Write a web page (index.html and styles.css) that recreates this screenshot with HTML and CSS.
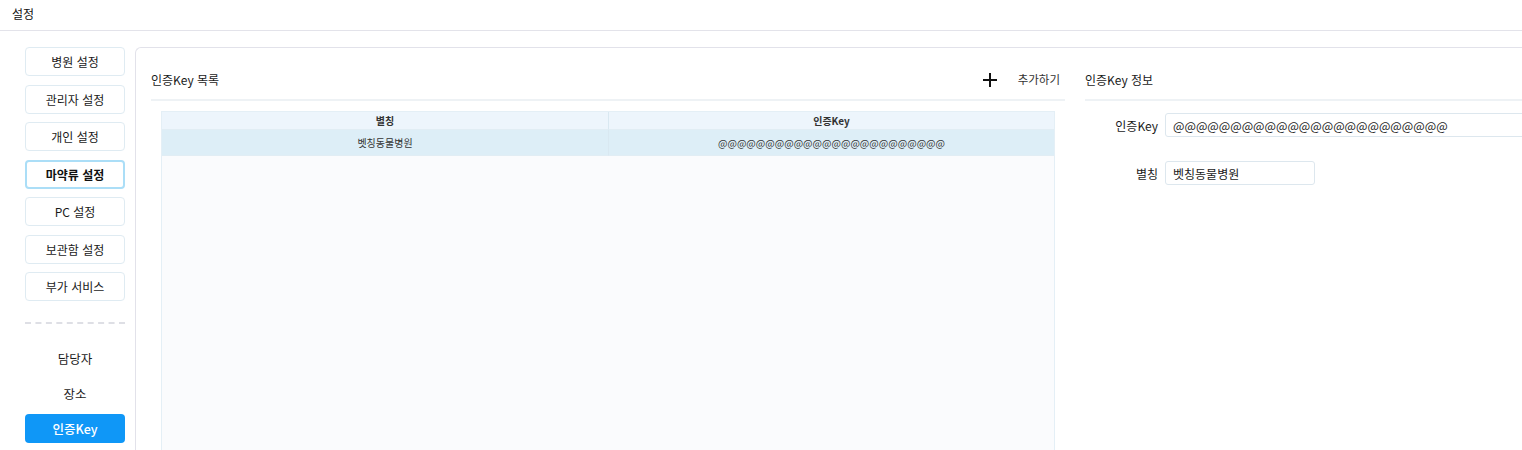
FILE: index.html
```html
<!DOCTYPE html>
<html lang="ko">
<head>
  <meta charset="UTF-8">
  <meta name="viewport" content="width=device-width, initial-scale=1.0">
  <title>설정</title>
  <link rel="stylesheet" href="styles.css">
</head>
<body>
  <header class="topbar">설정</header>

  <div class="main">
    <nav class="sidebar">
      <button class="menu-btn">병원 설정</button>
      <button class="menu-btn">관리자 설정</button>
      <button class="menu-btn">개인 설정</button>
      <button class="menu-btn active">마약류 설정</button>
      <button class="menu-btn">PC 설정</button>
      <button class="menu-btn">보관함 설정</button>
      <button class="menu-btn">부가 서비스</button>

      <div class="divider"></div>

      <div class="sub-menu">
        <button class="sub-btn">담당자</button>
        <button class="sub-btn">장소</button>
        <button class="sub-btn selected">인증Key</button>
      </div>
    </nav>

    <section class="panel">
      <div class="key-list">
        <div class="section-head">
          <span class="section-title">인증Key 목록</span>
          <button class="add-btn">
            <svg width="14" height="14" viewBox="0 0 14 14">
              <path d="M7 0v14M0 7h14" stroke="#111" stroke-width="2"/>
            </svg>
            <span>추가하기</span>
          </button>
        </div>

        <div class="table">
          <div class="row head">
            <div class="cell">별칭</div>
            <div class="cell">인증Key</div>
          </div>
          <div class="row picked">
            <div class="cell">벳칭동물병원</div>
            <div class="cell">@@@@@@@@@@@@@@@@@@@@@@@@</div>
          </div>
        </div>
      </div>

      <div class="key-info">
        <div class="section-head">
          <span class="section-title">인증Key 정보</span>
        </div>

        <div class="form">
          <label class="field">
            <span class="field-label">인증Key</span>
            <input class="input wide" type="text" value="@@@@@@@@@@@@@@@@@@@@@@@@">
          </label>
          <label class="field">
            <span class="field-label">별칭</span>
            <input class="input" type="text" value="벳칭동물병원">
          </label>
        </div>
      </div>
    </section>
  </div>
</body>
</html>
```

FILE: styles.css
```css
* {
  box-sizing: border-box;
}

html,
body {
  height: 100%;
}

body {
  margin: 0;
  font-family: "Noto Sans CJK KR", "Noto Sans", sans-serif;
  font-size: 12px;
  color: #1a1a1a;
  background: #fff;
  display: flex;
  flex-direction: column;
  overflow: hidden;
}

.topbar {
  height: 31px;
  padding: 5px 12px 0;
  font-size: 12px;
  color: #111;
  border-bottom: 1px solid #e3e3ea;
}

.main {
  flex: 1;
  display: flex;
  gap: 10px;
  padding: 16px 0 0 25px;
  min-height: 0;
}

/* left menu */
.sidebar {
  width: 100px;
  flex-shrink: 0;
  display: flex;
  flex-direction: column;
}

.menu-btn {
  height: 29px;
  margin-bottom: 8.5px;
  font-family: inherit;
  font-size: 12px;
  color: #1a1a1a;
  background: #fff;
  border: 1px solid #dfebf2;
  border-radius: 4px;
  cursor: pointer;
}

.menu-btn.active {
  border: 2px solid #abdef7;
  font-weight: bold;
  color: #111;
}

.divider {
  margin-top: 12px;
  border-top: 2px dashed #dedfe5;
}

.sub-menu {
  display: flex;
  flex-direction: column;
  gap: 6px;
  margin-top: 20px;
}

.sub-btn {
  height: 29px;
  font-family: inherit;
  font-size: 12.5px;
  color: #1a1a1a;
  background: none;
  border: none;
  border-radius: 4px;
  cursor: pointer;
}

.sub-btn.selected {
  background: #0f97f7;
  color: #fff;
  font-weight: 500;
}

/* main panel */
.panel {
  flex: 1;
  display: flex;
  gap: 20px;
  padding: 0 0 0 15px;
  border: 1px solid #e2e2ea;
  border-right: none;
  border-bottom: none;
  border-top-left-radius: 6px;
  min-width: 0;
}

.key-list {
  width: 914px;
  flex-shrink: 0;
  display: flex;
  flex-direction: column;
}

.key-info {
  flex: 1;
  min-width: 0;
  overflow: hidden;
}

.section-head {
  height: 53px;
  padding: 23px 0 0;
  display: flex;
  align-items: flex-start;
  justify-content: space-between;
  border-bottom: 2px solid #eef2f5;
}

.section-title {
  font-size: 12px;
  color: #1a1a1a;
  line-height: 17px;
}

.add-btn {
  display: flex;
  align-items: center;
  gap: 21px;
  margin-right: 5px;
  padding: 0;
  font-family: inherit;
  font-size: 11.5px;
  color: #333;
  background: none;
  border: none;
  cursor: pointer;
  line-height: 17px;
}

/* key table */
.table {
  flex: 1;
  margin: 10px 10px 0;
  background: #fafbfd;
  border: 1px solid #e4eff6;
  border-bottom: none;
}

.row {
  display: grid;
  grid-template-columns: 1fr 1fr;
  font-size: 10px;
  color: #333;
}

.row.head {
  height: 18px;
  background: #edf5fc;
  font-weight: bold;
}

.row.picked {
  height: 26px;
  background: #ddeef7;
}

.cell {
  display: flex;
  align-items: center;
  justify-content: center;
  border-bottom: 1px solid #e1edf4;
}

.cell + .cell {
  border-left: 1px solid #d9e8f1;
}

/* key form */
.form {
  display: flex;
  flex-direction: column;
  gap: 24px;
  padding-top: 12px;
}

.field {
  display: flex;
  align-items: center;
  gap: 7px;
}

.field-label {
  width: 73px;
  flex-shrink: 0;
  text-align: right;
  font-size: 12px;
  color: #1a1a1a;
}

.input {
  width: 150px;
  height: 24px;
  flex-shrink: 0;
  padding: 0 7px;
  font-family: inherit;
  font-size: 12px;
  color: #1a1a1a;
  border: 1px solid #dde7ee;
  border-radius: 3px;
  outline: none;
}

.input.wide {
  width: 420px;
  font-size: 12.1px;
}
```
